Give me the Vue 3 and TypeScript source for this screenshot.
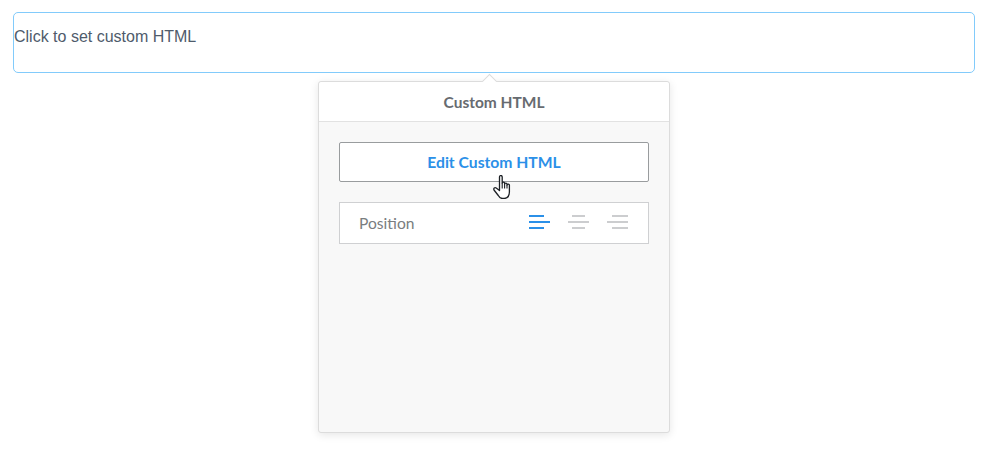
<script setup lang="ts">
const aligns: { id: string; active: boolean; lines: [number, number][] }[] = [
  { id: 'left', active: true, lines: [[0, 15], [0, 21], [0, 15]] },
  { id: 'center', active: false, lines: [[4, 13], [0, 21], [4, 13]] },
  { id: 'right', active: false, lines: [[5, 16], [0, 21], [5, 16]] }
]
</script>

<template>
  <div class="page">
    <div class="field">Click to set custom HTML</div>
    <section class="popup">
      <span class="arrow"></span>
      <header class="head">Custom HTML</header>
      <div class="body">
        <button class="edit" type="button">Edit Custom HTML</button>
        <svg class="cursor" width="18" height="24" viewBox="0 0 18 24">
          <path d="M6.500 12V2c0-2 2.700-2 2.700 0v6c0-1.300 2.400-1.300 2.400 0v1c0-1.200 2.400-1.200 2.400 0v1c0-1.200 2.400-1.200 2.400 0v7c0 2.500-1 6-5 6.500H9.500c-2 0-3.200-1.200-4.200-3L1 15c-.8-1.500.8-3 2.200-2l3.300 2.500z" fill="#fff" stroke="#1c2025" stroke-width="1.300" stroke-linejoin="round"/>
          <path d="M9.200 8v5.500M11.600 9v4.500M14 10v3.500" fill="none" stroke="#1c2025" stroke-width="1.100"/>
        </svg>
        <div class="position">
          <span class="label">Position</span>
          <div class="icons">
            <svg v-for="a in aligns" :key="a.id" class="icon" :class="{ active: a.active }" width="21" height="14" viewBox="0 0 21 14">
              <rect v-for="(l, i) in a.lines" :key="i" :x="l[0]" :y="i * 6" :width="l[1]" height="2" />
            </svg>
          </div>
        </div>
      </div>
    </section>
  </div>
</template>

<style>
html, body { margin: 0; background: #fff; }
</style>

<style scoped>
.page {
  width: 984px;
  height: 457px;
  box-sizing: border-box;
  padding: 12px 9px 0 13px;
  overflow: hidden;
  font-family: Lato, "Liberation Sans", sans-serif;
}
.field {
  box-sizing: border-box;
  height: 61px;
  padding: 14px 0 0;
  border: 1px solid #82cbfb;
  border-radius: 5px;
  font: 16px/20px "Liberation Sans", Arial, sans-serif;
  color: #4f5b6b;
}
.popup {
  position: relative;
  box-sizing: border-box;
  width: 352px;
  height: 352px;
  margin: 8px 0 0 305px;
  border: 1px solid #dcdcdc;
  border-radius: 3px;
  background: #f8f8f8;
  box-shadow: 0 2px 8px rgba(0, 0, 0, 0.1);
  display: flex;
  flex-direction: column;
}
.arrow {
  position: absolute;
  top: -6px;
  left: 165px;
  width: 10px;
  height: 10px;
  background: #fff;
  border: 1px solid #dcdcdc;
  border-right: 0;
  border-bottom: 0;
  transform: rotate(45deg);
}
.head {
  position: relative;
  box-sizing: border-box;
  height: 40px;
  line-height: 41px;
  text-align: center;
  font-size: 15.500px;
  font-weight: 700;
  color: #676b70;
  background: #fff;
  border-bottom: 1px solid #e2e2e2;
  border-radius: 3px 3px 0 0;
}
.body {
  position: relative;
  padding: 20px;
  display: flex;
  flex-direction: column;
  gap: 20px;
}
.edit {
  box-sizing: border-box;
  height: 40px;
  width: 310px;
  padding: 0;
  background: #fff;
  border: 1px solid #999c9e;
  border-radius: 2px;
  font-family: inherit;
  font-size: 15.700px;
  font-weight: 700;
  color: #2b90e8;
}
.cursor {
  position: absolute;
  left: 174px;
  top: 53px;
}
.position {
  box-sizing: border-box;
  height: 42px;
  width: 310px;
  padding: 0 20px 0 19px;
  background: #fff;
  border: 1px solid #cfd0d2;
  display: flex;
  align-items: center;
  justify-content: space-between;
}
.label {
  padding-bottom: 1px;
  font-size: 15.600px;
  color: #7a7d80;
}
.icons {
  display: flex;
  gap: 18px;
  padding-bottom: 2px;
}
.icon {
  display: block;
  fill: #cccdcf;
}
.icon.active {
  fill: #2b90e8;
}
</style>
